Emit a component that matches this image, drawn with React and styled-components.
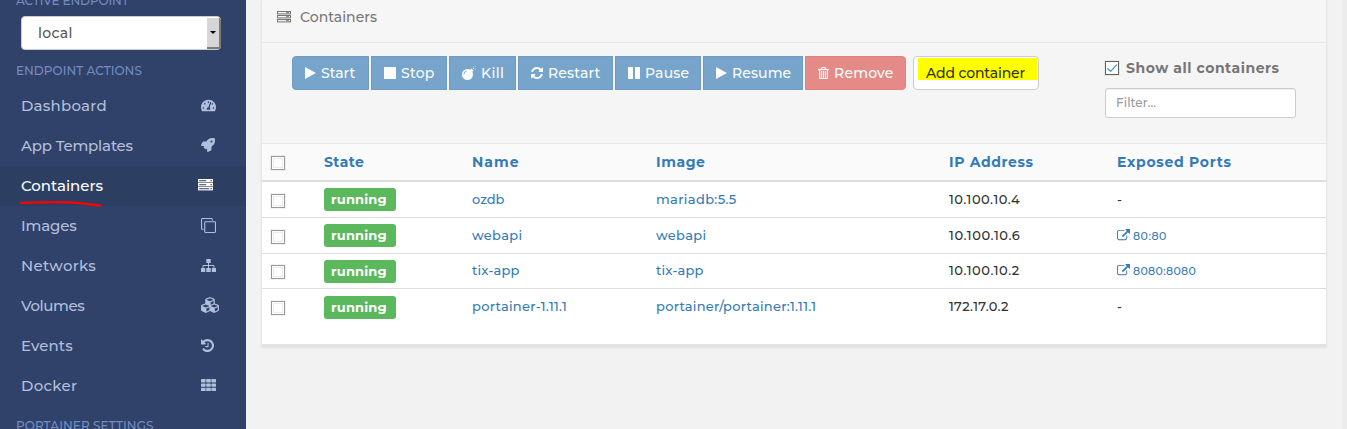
import React from 'react';
import styled, { createGlobalStyle, css } from 'styled-components';
import { FaTachometerAlt, FaRocket, FaCubes } from 'react-icons/fa';

const GlobalStyle = createGlobalStyle`
  * { box-sizing: border-box; }
  html, body, #root { height: 100%; }
  body {
    margin: 0;
    overflow: hidden;
    background: #f2f2f2;
    font-family: Montserrat, Inter, "Liberation Sans", sans-serif;
    font-weight: 500;
    color: #333;
  }
`;

const Label = styled.span`
  letter-spacing: ${(p) => p.$track || 0}px;
  white-space: nowrap;
`;

const Page = styled.div`
  display: flex;
  height: 429px;
  overflow: hidden;
`;

/* Sidebar */
const Sidebar = styled.nav`
  width: 246px;
  flex: none;
  background: #30426a;
`;

const SectionTitle = styled.div`
  height: ${(p) => p.$height}px;
  line-height: ${(p) => p.$line}px;
  padding-left: 16px;
  font-size: 12px;
  color: #738bc0;
`;

const EndpointSelect = styled.div`
  display: flex;
  justify-content: space-between;
  width: 200px;
  height: 34px;
  margin: 0 0 0 21px;
  padding: 1px 0 0 16px;
  border: 1px solid #ccc;
  border-radius: 4px;
  background: #fff;
  color: #555;
  font-size: 14px;
  line-height: 31px;
`;

const SelectArrow = styled.span`
  display: flex;
  align-items: center;
  justify-content: center;
  width: 14px;
  height: 31px;
  margin-right: -1px;
  border: solid #7b7b78;
  border-width: 0 2px 2px 0;
  border-radius: 0 2px 3px 0;
  background: #d6d6d6;
  &::after {
    content: '';
    border: 3px solid transparent;
    border-top-color: #000;
    border-bottom: 0;
    margin-bottom: 1px;
  }
`;

const NavItem = styled.a`
  position: relative;
  display: flex;
  align-items: center;
  height: 40px;
  padding: 0 0 2px 21px;
  font-size: 15px;
  color: ${(p) => (p.$active ? '#fff' : '#b2bfdc')};
  background: ${(p) => (p.$active ? '#2d3e63' : 'transparent')};
`;

const NavIcon = styled.span`
  display: flex;
  width: ${(p) => (p.$active ? 48 : 45)}px;
  margin-left: auto;
  svg { display: block; }
`;

const Underline = styled.svg`
  position: absolute;
  left: 18px;
  top: 34px;
  width: 88px;
  height: 8px;
  z-index: 1;
`;

/* Content */
const Content = styled.main`
  flex: 1;
  padding: 0 15px;
`;

const ScrollEdge = styled.div`
  width: 5px;
  background: #ececec;
`;

const Widget = styled.section`
  height: 346px;
  border: 1px solid #e7e7e7;
  border-top: 0;
  background: #fff;
  border-bottom: 2px solid #e3e3e3;
  box-shadow: 0 2px 2px rgba(0, 0, 0, 0.07);
`;

const WidgetHeader = styled.header`
  display: flex;
  align-items: center;
  gap: 9px;
  height: 43px;
  padding: 0 15px 9px;
  border-bottom: 1px solid #e7e7e7;
  background: #f6f6f6;
  color: #767676;
  font-size: 14px;
`;

const Toolbar = styled.div`
  display: flex;
  justify-content: space-between;
  height: 101px;
  padding: 13px 30px 0;
  border-bottom: 1px solid #e7e7e7;
  background: #f5f5f5;
`;

const Actions = styled.div`
  display: flex;
  align-items: flex-start;
`;

const ButtonGroup = styled.div`
  display: flex;
  gap: 2px;
  margin-right: 7px;
`;

const Button = styled.button`
  display: flex;
  align-items: center;
  gap: 5px;
  width: ${(p) => p.$width}px;
  height: 34px;
  padding: 0 0 0 12px;
  border: 1px solid ${(p) => (p.$danger ? '#e07f7c' : '#6e9bc4')};
  border-radius: ${(p) => (p.$first ? '4px 0 0 4px' : p.$danger ? '0 4px 4px 0' : '0')};
  background: ${(p) => (p.$danger ? '#e48b88' : '#76a4cb')};
  color: #fafcfd;
  font: inherit;
  font-size: 14px;
  svg { display: block; flex: none; }
`;

const AddButton = styled.button`
  width: 126px;
  height: 34px;
  padding: 1px 1px 10px 4px;
  border: 1px solid #ccc;
  border-radius: 4px;
  background: #fff;
  color: #333300;
  font: inherit;
  font-size: 14px;
`;

const Highlight = styled.span`
  display: block;
  height: 22px;
  padding-left: 8px;
  background: #ff0;
  text-align: left;
  line-height: 30px;
`;

const FilterPanel = styled.div`
  width: 191px;
`;

const ShowAll = styled.label`
  display: flex;
  align-items: center;
  gap: 7px;
  height: 23px;
  margin-bottom: 9px;
  font-size: 14px;
  font-weight: 700;
  color: #767676;
`;

const FilterInput = styled.div`
  height: 30px;
  padding-left: 10px;
  border: 1px solid #ccc;
  border-radius: 3px;
  background: #fff;
  box-shadow: inset 0 1px 1px rgba(0, 0, 0, 0.075);
  color: #999;
  font-size: 12px;
  line-height: 28px;
`;

const Checkbox = styled.span`
  display: flex;
  align-items: center;
  justify-content: center;
  width: 14px;
  height: 14px;
  border: 1px solid ${(p) => (p.$checked ? '#5f5f5f' : '#9a9a9a')};
  outline: 1px solid rgba(0, 0, 0, 0.05);
  background: #fff;
  ${(p) => !p.$checked && css`box-shadow: inset 0 0 0 1px #fff, inset 0 0 0 2px #ececec;`}
`;

/* Table */
const Row = styled.div`
  display: grid;
  grid-template-columns: 62px 148px 184px 293px 168px 1fr;
  align-items: center;
  height: ${(p) => p.$height}px;
  border-bottom: ${(p) => (p.$last ? 0 : 1)}px solid #ddd;
  font-size: 13px;
`;

const HeadRow = styled(Row)`
  height: 38px;
  border-bottom: 2px solid #ddd;
  background: #fafafa;
  color: #337ab7;
  font-size: 14px;
  font-weight: 700;
`;

const CheckCell = styled.div`
  align-self: start;
  padding: ${(p) => (p.$tight ? 11 : 12)}px 0 0 9px;
`;

const Cell = styled.div`
  padding-bottom: 2px;
  color: #333;
`;

const LinkCell = styled.a`
  padding-bottom: 2px;
  color: #337ab7;
`;

const PortLink = styled.a`
  display: flex;
  align-items: center;
  gap: 3px;
  color: #337ab7;
  font-size: 11px;
  svg { display: block; margin-bottom: 1px; }
`;

const Badge = styled.span`
  display: block;
  width: 72px;
  height: 23px;
  padding-left: 7px;
  border-radius: 3px;
  background: #5cb85c;
  color: #fff;
  font-size: 13px;
  font-weight: 700;
  line-height: 22px;
`;

/* Icons */
const Glyph = ({ w, h, d, box = '0 0 1792 1792' }) => (
  <svg width={w} height={h} viewBox={box} fill="currentColor"><path d={d} /></svg>
);

const ServerIcon = ({ w = 15, light = '#2d3e63' }) => (
  <svg width={w} height="12" viewBox="0 0 15 12" fill="currentColor">
    {[0, 4, 8].map((y) => (
      <g key={y}>
        <rect y={y} width="15" height="3.4" />
        <rect x="1.2" y={y + 1} width={y > 7 ? 10 : 7} height="1.3" fill={light} opacity="0.75" />
        <rect x="12.5" y={y + 1} width="1.2" height="1.3" fill={light} />
      </g>
    ))}
  </svg>
);

const HeaderServerIcon = () => (
  <svg width="14" height="12" viewBox="0 0 14 12" fill="none" stroke="currentColor">
    {[0.5, 4.5, 8.5].map((y) => (
      <g key={y}>
        <rect x="0.5" y={y} width="13" height="2.4" />
        <path d={`M9 ${y + 1.2}h3`} />
      </g>
    ))}
  </svg>
);

const CloneIcon = () => (
  <Glyph w={15} h={15} d="M1664 1632v-1088q0-13-9.5-22.5t-22.5-9.5h-1088q-13 0-22.5 9.5t-9.5 22.5v1088q0 13 9.5 22.5t22.5 9.5h1088q13 0 22.5-9.5t9.5-22.5zm128-1088v1088q0 66-47 113t-113 47h-1088q-66 0-113-47t-47-113v-1088q0-66 47-113t113-47h1088q66 0 113 47t47 113zm-384-384v160h-128v-160q0-13-9.5-22.5t-22.5-9.5h-1088q-13 0-22.5 9.5t-9.5 22.5v1088q0 13 9.5 22.5t22.5 9.5h160v128h-160q-66 0-113-47t-47-113v-1088q0-66 47-113t113-47h1088q66 0 113 47t47 113z" />
);

const SitemapIcon = () => (
  <svg width="15" height="13" viewBox="0 0 15 13" fill="currentColor">
    <rect x="5.3" width="4.4" height="4" rx="0.5" />
    <rect y="9" width="4.2" height="4" rx="0.5" />
    <rect x="5.3" y="9" width="4.4" height="4" rx="0.5" />
    <rect x="10.8" y="9" width="4.2" height="4" rx="0.5" />
    <path d="M2 9.2V6.5h11v2.7M7.5 4v5" fill="none" stroke="currentColor" />
  </svg>
);

const HistoryIcon = () => (
  <Glyph w={13} h={13} box="128 128 1536 1536" d="M1664 896q0 156-61 298t-164 245-245 164-298 61q-172 0-327-72.5t-264-204.5q-7-10-6.5-22.5t8.5-20.5l137-138q10-9 25-9 16 2 23 12 73 95 179 147t225 52q104 0 198.5-40.5t163.5-109.5 109.5-163.5 40.5-198.5-40.5-198.5-109.5-163.5-163.5-109.5-198.5-40.5q-98 0-188 35.5t-160 101.5l137 138q31 30 14 69-17 40-59 40h-448q-26 0-45-19t-19-45v-448q0-42 40-59 39-17 69 14l130 129q107-101 244.5-156.5t284.5-55.5q156 0 298 61t245 164 164 245 61 298zm-640-288v448q0 14-9 23t-23 9h-320q-14 0-23-9t-9-23v-64q0-14 9-23t23-9h224v-352q0-14 9-23t23-9h64q14 0 23 9t9 23z" />
);

const GridIcon = () => (
  <svg width="15" height="12" viewBox="0 0 15 12" fill="currentColor">
    {[0, 4.4, 8.8].map((y) => [0, 5.2, 10.4].map((x) => (
      <rect key={`${x}-${y}`} x={x} y={y} width="4.6" height="3.4" rx="0.6" />
    )))}
  </svg>
);

const PlayIcon = () => <Glyph w={11} h={12} box="0 0 11 12" d="M0 0 11 6 0 12z" />;
const StopIcon = () => <Glyph w={12} h={12} box="0 0 12 12" d="M0 0h12v12H0z" />;
const PauseIcon = () => <Glyph w={12} h={12} box="0 0 12 12" d="M0 0h5v12H0zM7 0h5v12H7z" />;

const RefreshIcon = () => (
  <Glyph w={12} h={12} box="128 128 1536 1536" d="M1639 1056q0 5-1 7-64 268-268 434.5t-478 166.5q-146 0-282.5-55t-243.5-157l-129 129q-19 19-45 19t-45-19-19-45v-448q0-26 19-45t45-19h448q26 0 45 19t19 45-19 45l-137 137q71 66 161 102t187 36q134 0 250-65t186-179q11-17 53-117 8-23 30-23h192q13 0 22.5 9.5t9.5 22.5zm25-800v448q0 26-19 45t-45 19h-448q-26 0-45-19t-19-45 19-45l138-138q-148-137-349-137-134 0-250 65t-186 179q-11 17-53 117-8 23-30 23h-199q-13 0-22.5-9.5t-9.5-22.5v-7q65-268 270-434.5t480-166.5q146 0 284 55.5t245 156.5l130-129q19-19 45-19t45 19 19 45z" />
);

const BombIcon = () => (
  <svg width="14" height="14" viewBox="0 0 14 14" fill="currentColor">
    <circle cx="5.5" cy="8.5" r="5.5" />
    <path d="M7.8 4 9.4 2.4l2.2 2.2L10 6.2z" />
    <path d="M10.8 3.2 12 2" stroke="currentColor" strokeWidth="0.8" />
    <path d="M1.8 8.2q.3-2.6 2.9-3.2" fill="none" stroke="#76a4cb" strokeWidth="0.9" />
    <g opacity="0.6">
      <rect x="10.6" y="0.4" width="1" height="1" />
      <rect x="12.8" y="0.2" width="1" height="1" />
      <rect x="12.8" y="2.6" width="1" height="1" />
    </g>
  </svg>
);

const TrashIcon = () => (
  <svg width="11" height="12" viewBox="0 0 11 12" fill="none" stroke="currentColor">
    <path d="M0 2.5h11" strokeWidth="1.2" />
    <path d="M3.6 2.2V.6h3.8v1.6" />
    <path d="M1.6 3v7.6q0 .9.9.9h6q.9 0 .9-.9V3" strokeWidth="1.2" />
    <path d="M3.7 4v6.8M5.5 4v6.8M7.3 4v6.8" />
  </svg>
);

const ExternalIcon = () => (
  <Glyph w={13} h={13} d="M1408 928v320q0 119-84.5 203.5t-203.5 84.5h-832q-119 0-203.5-84.5t-84.5-203.5v-832q0-119 84.5-203.5t203.5-84.5h704q14 0 23 9t9 23v64q0 14-9 23t-23 9h-704q-66 0-113 47t-47 113v832q0 66 47 113t113 47h832q66 0 113-47t47-113v-320q0-14 9-23t23-9h64q14 0 23 9t9 23zm384-864v512q0 26-19 45t-45 19-45-19l-176-176-652 652q-10 10-23 10t-23-10l-114-114q-10-10-10-23t10-23l652-652-176-176q-19-19-19-45t19-45 45-19h512q26 0 45 19t19 45z" />
);

const CheckMark = () => (
  <svg width="12" height="12" viewBox="0 0 12 12" fill="none" stroke="#4a90cf" strokeWidth="1.3">
    <path d="M1.3 6.3 4.6 9.4 10.8 2.6" />
  </svg>
);

const navItems = [
  { text: 'Dashboard', track: 0.22, icon: <FaTachometerAlt size={15} /> },
  { text: 'App Templates', track: -0.2, icon: <FaRocket size={14} /> },
  { text: 'Containers', track: -0.02, active: true, icon: <ServerIcon /> },
  { text: 'Images', track: -0.15, icon: <CloneIcon /> },
  { text: 'Networks', track: 0.3, icon: <SitemapIcon /> },
  { text: 'Volumes', track: -0.4, icon: <FaCubes size={18} /> },
  { text: 'Events', track: 0.1, icon: <HistoryIcon /> },
  { text: 'Docker', track: 0.3, icon: <GridIcon /> },
];

const actions = [
  { text: 'Start', width: 77, track: 0, icon: <PlayIcon /> },
  { text: 'Stop', width: 76, track: 0.25, icon: <StopIcon /> },
  { text: 'Kill', width: 67, track: 0.4, icon: <BombIcon /> },
  { text: 'Restart', width: 95, track: 0.15, icon: <RefreshIcon /> },
  { text: 'Pause', width: 86, track: 0.18, icon: <PauseIcon /> },
  { text: 'Resume', width: 100, track: 0.1, icon: <PlayIcon /> },
  { text: 'Remove', width: 101, track: 0.2, danger: true, icon: <TrashIcon /> },
];

const columns = [
  ['State', 0.43], ['Name', 1], ['Image', 0.56], ['IP Address', 0.61], ['Exposed Ports', 0.71],
];

const containers = [
  { name: ['ozdb', -0.02], image: ['mariadb:5.5', 0.35], ip: ['10.100.10.4', 0.5], height: 36 },
  { name: ['webapi', 0.3], image: ['webapi', 0.3], ip: ['10.100.10.6', 0.58], port: ['80:80', 0.5], height: 36 },
  { name: ['tix-app', 0.17], image: ['tix-app', 0.17], ip: ['10.100.10.2', 0.55], port: ['8080:8080', 0.33], height: 35, tight: true },
  { name: ['portainer-1.11.1', 0.28], image: ['portainer/portainer:1.11.1', 0.26], ip: ['172.17.0.2', 0.3], height: 36, last: true },
];

export default function App() {
  return (
    <Page>
      <GlobalStyle />
      <Sidebar>
        <SectionTitle $height={16} $line={2}><Label $track={-0.1}>ACTIVE ENDPOINT</Label></SectionTitle>
        <EndpointSelect>
          <Label $track={0.35}>local</Label>
          <SelectArrow />
        </EndpointSelect>
        <SectionTitle $height={36} $line={42}><Label $track={0.04}>ENDPOINT ACTIONS</Label></SectionTitle>
        {navItems.map((item) => (
          <NavItem key={item.text} $active={item.active}>
            <Label $track={item.track}>{item.text}</Label>
            <NavIcon $active={item.active}>{item.icon}</NavIcon>
            {item.active && (
              <Underline viewBox="0 0 88 8" fill="none" stroke="#f00" strokeWidth="2.2" strokeLinecap="round">
                <path d="M3 2.8C24 2 48 1.600 62 3.200S74 4.600 82.500 5.600" />
              </Underline>
            )}
          </NavItem>
        ))}
        <SectionTitle $height={23} $line={40}><Label $track={0.08}>PORTAINER SETTINGS</Label></SectionTitle>
      </Sidebar>
      <Content>
        <Widget>
          <WidgetHeader>
            <HeaderServerIcon />
            <Label $track={0.03}>Containers</Label>
          </WidgetHeader>
          <Toolbar>
            <Actions>
              <ButtonGroup>
                {actions.map((a, i) => (
                  <Button key={a.text} $width={a.width} $first={i === 0} $danger={a.danger}>
                    {a.icon}
                    <Label $track={a.track}>{a.text}</Label>
                  </Button>
                ))}
              </ButtonGroup>
              <AddButton><Highlight><Label $track={-0.15}>Add container</Label></Highlight></AddButton>
            </Actions>
            <FilterPanel>
              <ShowAll>
                <Checkbox $checked><CheckMark /></Checkbox>
                <Label $track={0.53}>Show all containers</Label>
              </ShowAll>
              <FilterInput><Label $track={0.08}>Filter...</Label></FilterInput>
            </FilterPanel>
          </Toolbar>
          <HeadRow>
            <CheckCell><Checkbox /></CheckCell>
            {columns.map(([text, track]) => <Label key={text} $track={track}>{text}</Label>)}
          </HeadRow>
          {containers.map((c) => (
            <Row key={c.name[0]} $height={c.height} $last={c.last}>
              <CheckCell $tight={c.tight}><Checkbox /></CheckCell>
              <Badge><Label $track={0.18}>running</Label></Badge>
              <LinkCell><Label $track={c.name[1]}>{c.name[0]}</Label></LinkCell>
              <LinkCell><Label $track={c.image[1]}>{c.image[0]}</Label></LinkCell>
              <Cell><Label $track={c.ip[1]}>{c.ip[0]}</Label></Cell>
              {c.port
                ? <PortLink><ExternalIcon /><Label $track={c.port[1]}>{c.port[0]}</Label></PortLink>
                : <Cell>-</Cell>}
            </Row>
          ))}
        </Widget>
      </Content>
      <ScrollEdge />
    </Page>
  );
}
